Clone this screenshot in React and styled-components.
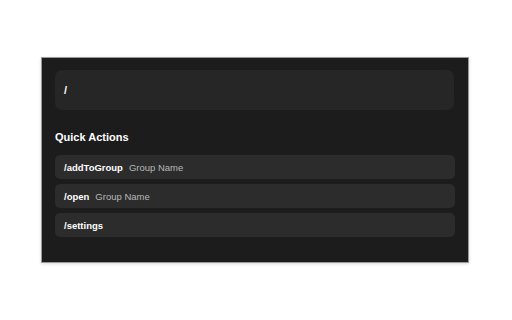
import React from "react";
import styled, { createGlobalStyle } from "styled-components";

const GlobalStyle = createGlobalStyle`
  html, body {
    margin: 0;
    padding: 0;
    background: #ffffff;
  }
  body {
    font-family: "Liberation Sans", Arial, sans-serif;
  }
`;

const Page = styled.div`
  width: 512px;
  height: 320px;
  padding: 57px 0 0 41px;
  box-sizing: border-box;
`;

const Panel = styled.div`
  width: 428px;
  height: 206px;
  box-sizing: border-box;
  background: #1c1c1c;
  border: 1px solid #9a9a9a;
  box-shadow: 0 1px 3px rgba(0, 0, 0, 0.15);
  padding: 12px 13px 0 13px;
  display: flex;
  flex-direction: column;
`;

const SearchBox = styled.div`
  height: 40px;
  width: 399px;
  border-radius: 7px;
  background: #262626;
  display: flex;
  align-items: center;
  padding: 0 9px;
  box-sizing: border-box;
  color: #ffffff;
  font-weight: bold;
  font-size: 11px;
`;

const Heading = styled.div`
  margin-top: 21px;
  color: #ffffff;
  font-weight: bold;
  font-size: 11px;
  line-height: 13px;
`;

const List = styled.div`
  margin-top: 11px;
  display: flex;
  flex-direction: column;
  gap: 5px;
`;

const Row = styled.div`
  height: 24px;
  width: 400px;
  border-radius: 5px;
  background: #2c2c2c;
  display: flex;
  align-items: center;
  padding: 0 9px;
  box-sizing: border-box;
  font-size: 9.5px;
`;

const Command = styled.span`
  color: #ffffff;
  font-weight: bold;
`;

const Arg = styled.span`
  color: #b8b8b8;
  margin-left: 6px;
`;

const actions = [
  { cmd: "/addToGroup", arg: "Group Name" },
  { cmd: "/open", arg: "Group Name" },
  { cmd: "/settings" },
];

export default function App() {
  return (
    <>
      <GlobalStyle />
      <Page>
        <Panel>
          <SearchBox>/</SearchBox>
          <Heading>Quick Actions</Heading>
          <List>
            {actions.map((a) => (
              <Row key={a.cmd}>
                <Command>{a.cmd}</Command>
                {a.arg && <Arg>{a.arg}</Arg>}
              </Row>
            ))}
          </List>
        </Panel>
      </Page>
    </>
  );
}
